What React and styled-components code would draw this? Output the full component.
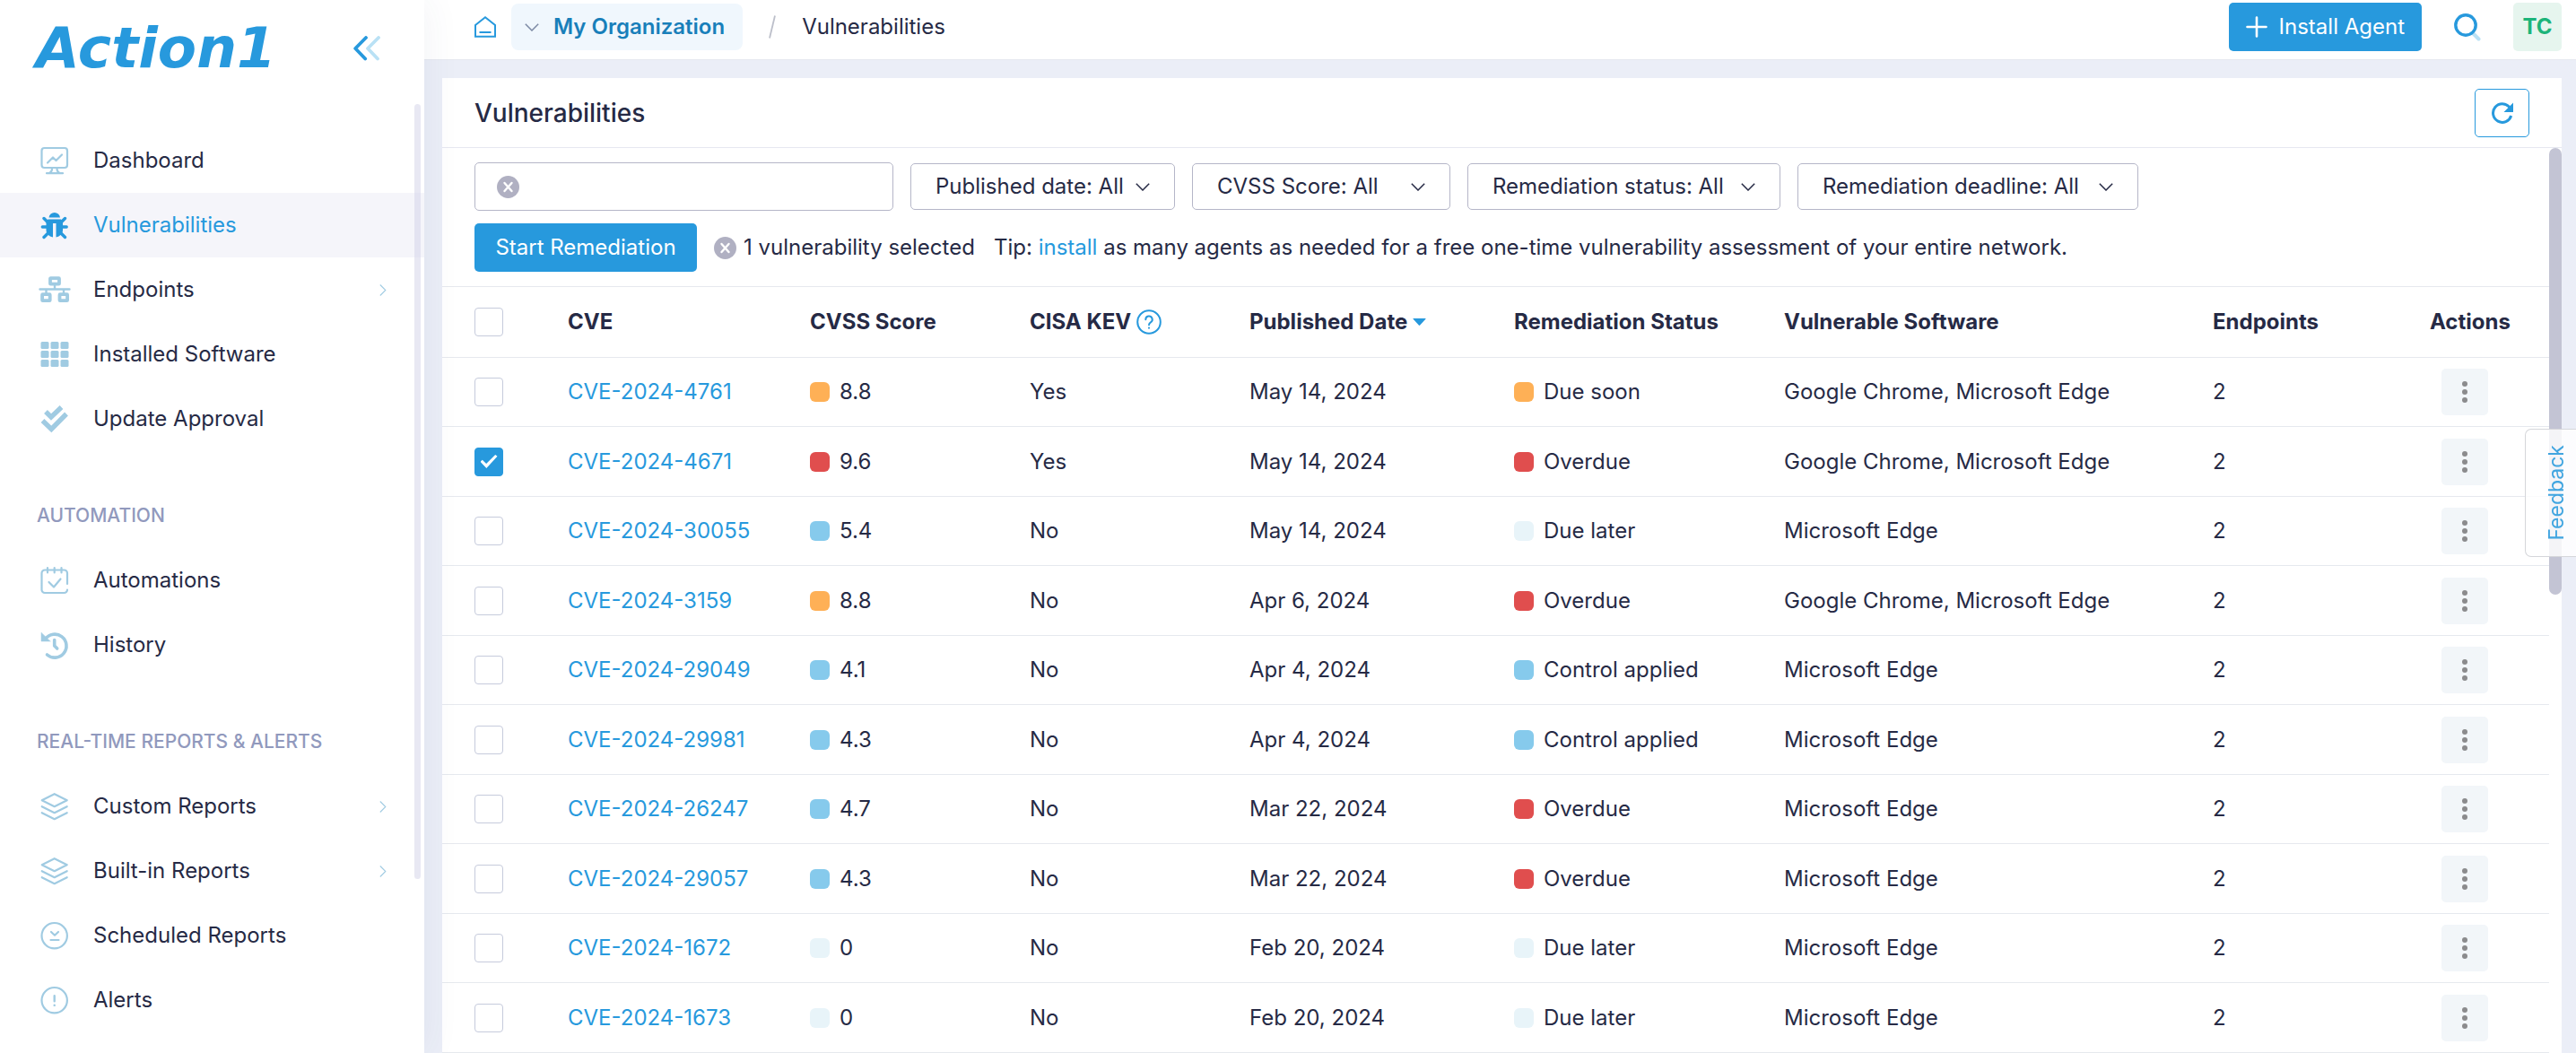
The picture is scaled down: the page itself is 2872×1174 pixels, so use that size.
import React from 'react';
import styled, { createGlobalStyle } from 'styled-components';

const GlobalStyle = createGlobalStyle`
  *, *::before, *::after {
    box-sizing: border-box;
  }

  body {
    margin: 0;
    background: #ebeef7;
    color: #262a45;
    font-family: Inter, 'Open Sans', sans-serif;
    font-size: 24px;
    line-height: 36px;
  }

  button, input, select {
    font: inherit;
    color: inherit;
    margin: 0;
  }

  button {
    padding: 0;
    border: 0;
    background: none;
    cursor: pointer;
  }

  svg {
    display: block;
    flex: none;
  }
`;

const Layout = styled.div`
  display: flex;
  height: 100vh;
  overflow: hidden;
`;

/* Sidebar */

const Sidebar = styled.aside`
  position: relative;
  z-index: 1;
  flex: none;
  display: flex;
  flex-direction: column;
  width: 473px;
  background: #fff;
  box-shadow: 0 0 40px rgba(60, 70, 110, 0.07);
`;

const SidebarTop = styled.div`
  display: flex;
  align-items: center;
  justify-content: space-between;
  height: 107px;
  padding: 0 49px 0 40px;
`;

const Logo = styled.a`
  color: #2799dd;
  font-family: 'DejaVu Sans', sans-serif;
  font-size: 63px;
  font-style: italic;
  font-weight: 700;
  line-height: 72px;
  text-decoration: none;
`;

const Nav = styled.nav`
  padding-top: 36px;
`;

const NavHeading = styled.h2`
  margin: 0;
  padding: 54px 41px 18px;
  color: #9199bd;
  font-size: 21px;
  font-weight: 500;
  line-height: 36px;
`;

const NavLink = styled.a`
  display: flex;
  align-items: center;
  gap: 26px;
  height: 72px;
  padding: 0 42px 0 44px;
  color: ${(p) => (p.$active ? '#2799dd' : '#262a45')};
  background: ${(p) => (p.$active ? '#f5f5fa' : 'transparent')};
  text-decoration: none;

  span {
    flex: 1;
  }
`;

const NavIcon = styled.svg`
  color: ${(p) => (p.$active ? '#2799dd' : '#a0cbe2')};
  fill: none;
  stroke: currentColor;
  stroke-linecap: round;
  stroke-linejoin: round;
  overflow: visible;
`;

const SidebarThumb = styled.div`
  position: absolute;
  top: 116px;
  right: 4px;
  width: 7px;
  height: 864px;
  border-radius: 4px;
  background: rgba(210, 210, 232, 0.5);
`;

/* Top bar */

const Main = styled.div`
  flex: 1;
  min-width: 0;
  display: flex;
  flex-direction: column;
`;

const TopBar = styled.header`
  flex: none;
  display: flex;
  align-items: center;
  justify-content: space-between;
  height: 67px;
  padding: 0 16px 6px 56px;
  border-bottom: 1px solid #e6e8f0;
  background: #fff;
`;

const Breadcrumbs = styled.nav`
  display: flex;
  align-items: center;
`;

const OrgButton = styled.button`
  display: flex;
  align-items: center;
  gap: 16px;
  height: 52px;
  margin: 0 29px 0 17px;
  padding: 0 20px 0 15px;
  border-radius: 8px;
  background: #f0f7fd;
  color: #187fba;
  font-weight: 600;
`;

const Crumb = styled.span`
  margin-left: 29px;
`;

const TopActions = styled.div`
  display: flex;
  align-items: center;
  gap: 36px;
`;

const PrimaryButton = styled.button`
  display: flex;
  align-items: center;
  justify-content: center;
  gap: 13px;
  min-width: ${(p) => (p.$wide ? '248px' : '0')};
  height: 54px;
  padding: 0 19px;
  border-radius: 5px;
  background: #2799dd;
  color: #fff;
`;

const Avatar = styled.button`
  width: 54px;
  height: 54px;
  border-radius: 5px;
  background: #e6f5ee;
  color: #1cb479;
  font-weight: 700;
`;

/* Panel */

const Panel = styled.section`
  flex: 1;
  min-height: 0;
  display: flex;
  flex-direction: column;
  margin: 20px 16px 0 20px;
  background: #fff;
`;

const PanelHeader = styled.div`
  flex: none;
  display: flex;
  align-items: center;
  justify-content: space-between;
  height: 78px;
  padding: 0 36px;
  border-bottom: 1px solid #e6e8f0;
`;

const PanelTitle = styled.h1`
  margin: 0;
  font-size: 28px;
  font-weight: 500;
`;

const RefreshButton = styled.button`
  display: flex;
  align-items: center;
  justify-content: center;
  width: 61px;
  height: 54px;
  border: 1px solid #2799dd;
  border-radius: 5px;
`;

const PanelBody = styled.div`
  flex: 1;
  min-height: 0;
  display: flex;
`;

const Content = styled.div`
  flex: 1;
  min-width: 0;
  overflow: hidden;
`;

const ScrollTrack = styled.div`
  flex: none;
  width: 14px;
`;

const ScrollThumb = styled.div`
  height: 498px;
  border-radius: 7px;
  background: #c3c4d4;
`;

const Toolbar = styled.div`
  display: flex;
  flex-direction: column;
  gap: 14px;
  padding: 16px 36px;
  border-bottom: 1px solid #e6e8ee;
`;

const ToolbarRow = styled.div`
  display: flex;
  align-items: center;
  gap: 19px;
`;

const SearchBox = styled.div`
  display: flex;
  align-items: center;
  gap: 12px;
  width: 467px;
  height: 54px;
  padding: 0 24px;
  border: 1px solid #b5b6c8;
  border-radius: 5px;

  input {
    flex: 1;
    min-width: 0;
    border: 0;
    outline: 0;
    background: none;
  }
`;

const FilterBox = styled.div`
  display: grid;
  align-items: center;
  width: ${(p) => p.$width}px;

  select {
    grid-area: 1 / 1;
    width: 100%;
    height: 52px;
    padding: 0 44px 0 27px;
    border: 1px solid #b5b6c8;
    border-radius: 5px;
    background: #fff;
    appearance: none;
  }

  svg {
    grid-area: 1 / 1;
    justify-self: end;
    margin-right: 28px;
    pointer-events: none;
  }
`;

const Selection = styled.div`
  display: flex;
  align-items: center;
  gap: 8px;
  min-width: 293px;
`;

const Tip = styled.p`
  margin: 0;
`;

const TextLink = styled.a`
  color: #2799dd;
  text-decoration: none;
`;

/* Table */

const Table = styled.table`
  width: 100%;
  table-layout: fixed;
  border-collapse: separate;
  border-spacing: 0;

  th, td {
    height: 77px;
    padding: 0;
    border-bottom: 1px solid #e6e9ee;
    text-align: left;
    white-space: nowrap;
  }

  tr:nth-child(even) td {
    height: 78px;
  }

  th {
    height: 79px;
    font-weight: 700;
  }

  th:first-child, td:first-child {
    padding-left: 36px;
  }
`;

const Column = styled.col`
  width: ${(p) => (p.$width ? `${p.$width}px` : 'auto')};
`;

const HeadCell = styled.div`
  display: flex;
  align-items: center;
  gap: 6px;
`;

const CheckBox = styled.input`
  display: grid;
  place-content: center;
  width: 32px;
  height: 32px;
  border: 1px solid #c6cbdc;
  border-radius: 4px;
  background: #fff;
  appearance: none;

  &:checked {
    border-color: #2799dd;
    background: #2799dd;
  }

  &:checked::before {
    content: '';
    width: 19px;
    height: 15px;
    background: #fff;
    clip-path: polygon(0 52%, 12% 38%, 35% 66%, 88% 0, 100% 12%, 36% 100%);
  }
`;

const Tagged = styled.div`
  display: flex;
  align-items: center;
  gap: 11px;
`;

const swatchColors = {
  orange: '#feb056',
  red: '#e04e4e',
  blue: '#86caec',
  pale: '#e8f4f9',
};

const Swatch = styled.i`
  width: 22px;
  height: 22px;
  border-radius: 6px;
  background: ${(p) => swatchColors[p.$color]};
`;

const MoreButton = styled.button`
  display: flex;
  align-items: center;
  justify-content: center;
  width: 52px;
  height: 52px;
  margin-left: 13px;
  border-radius: 5px;
  background: #f2f6f9;
`;

const FeedbackTab = styled.button`
  position: fixed;
  top: 478px;
  right: 0;
  width: 57px;
  height: 143px;
  padding: 10px 0 0 11px;
  border: 1px solid #d5d6da;
  border-right: 0;
  border-radius: 7px 0 0 7px;
  background: rgba(255, 255, 255, 0.82);
  color: #41a5e0;
  font-size: 23px;

  span {
    display: inline-block;
    writing-mode: vertical-rl;
    rotate: 180deg;
    line-height: 30px;
  }
`;

const icons = {
  dashboard: (
    <g strokeWidth="2.2">
      <rect x="1" y="1" width="28.5" height="22" rx="3" />
      <path d="M7.5 17.5l6-6 3.5 3.5 6.5-6.5M12.5 24c0 2.5-1 4-2.5 4.5M18 24c0 2.5 1 4 2.5 4.5M6.5 29.2h18" />
    </g>
  ),
  bug: (
    <g>
      <path d="M9 6.5a6.3 6.3 0 0 1 12.5 0z" fill="currentColor" stroke="none" />
      <path d="M8 8.5h14.5l2 3v9c0 4-3 7-7.5 8V13h-3.5v15.5c-4.500-1-7.5-4-7.5-8v-9z" fill="currentColor" stroke="none" />
      <path d="M3.5 7.5l5 5M27 7.5l-5 5M1.8 17h6M28.7 17h-6M3.5 28.5l5-5M27 28.5l-5-5" strokeWidth="3.4" />
    </g>
  ),
  network: (
    <g>
      <g strokeWidth="3.8">
        <rect x="10.5" y="2.2" width="10" height="6.5" rx="0.5" />
        <rect x="1.6" y="20.2" width="8.600" height="7" rx="0.5" />
        <rect x="21" y="20.2" width="8.600" height="7" rx="0.5" />
      </g>
      <path d="M-1 14.500h33M15.500 9v5M6 14.500v5M25.500 14.500v5" strokeWidth="2.400" />
    </g>
  ),
  grid: (
    <g fill="currentColor" stroke="none">
      {[0, 11, 22].map((x) =>
        [1, 11, 21].map((y) => <rect key={`${x}-${y}`} x={x} y={y} width="9" height="8" rx="1.5" />)
      )}
    </g>
  ),
  checks: (
    <path
      d="M5.500 7l6 6L23 2M2 17l9.800 9.500L28.500 9.500"
      strokeWidth="5.400"
      strokeLinecap="butt"
      strokeLinejoin="miter"
    />
  ),
  calendar: (
    <path
      strokeWidth="2.2"
      d="M29.5 19V7A3.500 3.500 0 0 0 26 3.500H4.500A3.500 3.500 0 0 0 1 7v18.500A3.500 3.500 0 0 0 4.500 29H26a3.500 3.500 0 0 0 3.500-3.500M7.500 1v5.500M15.200 1v5.500M23 1v5.500M9 17l5.500 5.500L22 13.500"
    />
  ),
  history: (
    <g>
      <path d="M5 8.500A13 13 0 1 1 7 26" strokeWidth="3.6" />
      <path d="M.5 1.500v9.500h10z" fill="currentColor" strokeWidth="0.5" />
      <path d="M15.200 9.500v6.500l3 3" strokeWidth="3.600" />
    </g>
  ),
  layers: <path d="M15.2 1.200l14 7-14 7-14-7zM1.200 15.200l14 7 14-7M1.200 22.200l14 7 14-7" strokeWidth="2.2" />,
  scheduled: (
    <g strokeWidth="2.2">
      <circle cx="15.2" cy="15.2" r="14.2" />
      <path d="M11.500 11l4 3.800 4-3.800M11 20h9" />
    </g>
  ),
  alert: (
    <g>
      <circle cx="15.2" cy="15.2" r="14.2" strokeWidth="2.2" />
      <path d="M15.200 10.200v6M15.200 20.800v.1" strokeWidth="2.4" />
    </g>
  ),
};

const navSections = [
  {
    items: [
      { label: 'Dashboard', icon: 'dashboard' },
      { label: 'Vulnerabilities', icon: 'bug', active: true },
      { label: 'Endpoints', icon: 'network', nested: true },
      { label: 'Installed Software', icon: 'grid' },
      { label: 'Update Approval', icon: 'checks' },
    ],
  },
  {
    title: 'AUTOMATION',
    items: [
      { label: 'Automations', icon: 'calendar' },
      { label: 'History', icon: 'history' },
    ],
  },
  {
    title: 'REAL-TIME REPORTS & ALERTS',
    items: [
      { label: 'Custom Reports', icon: 'layers', nested: true },
      { label: 'Built-in Reports', icon: 'layers', nested: true },
      { label: 'Scheduled Reports', icon: 'scheduled' },
      { label: 'Alerts', icon: 'alert' },
    ],
  },
];

const filters = [
  { label: 'Published date', width: 295 },
  { label: 'CVSS Score', width: 288 },
  { label: 'Remediation status', width: 349 },
  { label: 'Remediation deadline', width: 380 },
];

const columnWidths = [140, 270, 245, 245, 295, 301, null, 242, 133];

const both = 'Google Chrome, Microsoft Edge';
const edge = 'Microsoft Edge';

const rows = [
  { cve: 'CVE-2024-4761', score: '8.8', color: 'orange', kev: 'Yes', date: 'May 14, 2024', status: 'Due soon', software: both },
  { cve: 'CVE-2024-4671', score: '9.6', color: 'red', kev: 'Yes', date: 'May 14, 2024', status: 'Overdue', software: both, checked: true },
  { cve: 'CVE-2024-30055', score: '5.4', color: 'blue', kev: 'No', date: 'May 14, 2024', status: 'Due later', software: edge },
  { cve: 'CVE-2024-3159', score: '8.8', color: 'orange', kev: 'No', date: 'Apr 6, 2024', status: 'Overdue', software: both },
  { cve: 'CVE-2024-29049', score: '4.1', color: 'blue', kev: 'No', date: 'Apr 4, 2024', status: 'Control applied', software: edge },
  { cve: 'CVE-2024-29981', score: '4.3', color: 'blue', kev: 'No', date: 'Apr 4, 2024', status: 'Control applied', software: edge },
  { cve: 'CVE-2024-26247', score: '4.7', color: 'blue', kev: 'No', date: 'Mar 22, 2024', status: 'Overdue', software: edge },
  { cve: 'CVE-2024-29057', score: '4.3', color: 'blue', kev: 'No', date: 'Mar 22, 2024', status: 'Overdue', software: edge },
  { cve: 'CVE-2024-1672', score: '0', color: 'pale', kev: 'No', date: 'Feb 20, 2024', status: 'Due later', software: edge },
  { cve: 'CVE-2024-1673', score: '0', color: 'pale', kev: 'No', date: 'Feb 20, 2024', status: 'Due later', software: edge },
];

const statusColors = {
  'Due soon': 'orange',
  Overdue: 'red',
  'Due later': 'pale',
  'Control applied': 'blue',
};

const ChevronDown = ({ color = '#262a45' }) => (
  <svg width="16" height="9" viewBox="0 0 16 9" fill="none" stroke={color} strokeWidth="1.5">
    <path d="M.8.8L8 8 15.2.8" />
  </svg>
);

const ClearIcon = () => (
  <svg width="25" height="25" viewBox="0 0 25 25">
    <circle cx="12.5" cy="12.5" r="12.5" fill="#b0b0c2" />
    <path d="M8.500 8l8 9M16.500 8l-8 9" stroke="#fff" strokeWidth="2.4" strokeLinecap="round" />
  </svg>
);

const SidebarNav = () => (
  <Sidebar>
    <SidebarTop>
      <Logo href="#">Action1</Logo>
      <button aria-label="Collapse menu">
        <svg width="30" height="28" viewBox="0 0 30 28" fill="none" strokeWidth="3.8" strokeLinecap="round" strokeLinejoin="round">
          <path d="M28 2L16 14l11 11.5" stroke="#b9e1f5" />
          <path d="M14 2L2.200 14l11 11.5" stroke="#2799dd" />
        </svg>
      </button>
    </SidebarTop>
    <Nav>
      {navSections.map((section, index) => (
        <div key={index}>
          {section.title && <NavHeading>{section.title}</NavHeading>}
          {section.items.map((item) => (
            <NavLink key={item.label} href="#" $active={item.active}>
              <NavIcon width="34" height="31" viewBox="-1.5 0 34 31" $active={item.active}>
                {icons[item.icon]}
              </NavIcon>
              <span>{item.label}</span>
              {item.nested && (
                <svg width="8" height="13" viewBox="0 0 8 13" fill="none" stroke="#a0cbe2" strokeWidth="1.1">
                  <path d="M.8.500l6 6-6 6" />
                </svg>
              )}
            </NavLink>
          ))}
        </div>
      ))}
    </Nav>
    <SidebarThumb />
  </Sidebar>
);

const Header = () => (
  <TopBar>
    <Breadcrumbs aria-label="Breadcrumb">
      <a href="#" aria-label="Home">
        <svg width="24" height="24" viewBox="0 0 24 24" fill="none" stroke="#2799dd" strokeWidth="2">
          <path d="M1 10L12 1.300 23 10v12.800H1zM5.500 18h13" />
        </svg>
      </a>
      <OrgButton>
        <ChevronDown color="#7d8aa5" />
        My Organization
      </OrgButton>
      <svg width="8" height="26" viewBox="0 0 8 26" stroke="#bcbfca" strokeWidth="1.8">
        <path d="M7 .5L1 25.5" />
      </svg>
      <Crumb>Vulnerabilities</Crumb>
    </Breadcrumbs>
    <TopActions>
      <PrimaryButton>
        <svg width="24" height="24" viewBox="0 0 24 24" stroke="#fff" strokeWidth="2.6" strokeLinecap="round">
          <path d="M12 1.500v21M1.500 12h21" />
        </svg>
        Install Agent
      </PrimaryButton>
      <button aria-label="Search">
        <svg width="30" height="31" viewBox="0 0 30 31" fill="none">
          <path d="M21.500 22.500l6 6" stroke="#b9e1f5" strokeWidth="4" strokeLinecap="round" />
          <circle cx="13" cy="13" r="11.2" stroke="#2799dd" strokeWidth="3.4" />
        </svg>
      </button>
      <Avatar>TC</Avatar>
    </TopActions>
  </TopBar>
);

const VulnerabilityTable = () => (
  <Table>
    <colgroup>
      {columnWidths.map((width, index) => (
        <Column key={index} $width={width} />
      ))}
    </colgroup>
    <thead>
      <tr>
        <th><CheckBox type="checkbox" aria-label="Select all" /></th>
        <th>CVE</th>
        <th>CVSS Score</th>
        <th>
          <HeadCell>
            CISA KEV
            <svg width="28" height="28" viewBox="0 0 28 28" fill="none" stroke="#2799dd" strokeWidth="2" strokeLinecap="round">
              <circle cx="14" cy="14" r="12.8" />
              <path d="M10.300 11.200a3.700 3.700 0 1 1 5.600 3.100c-1.300.8-1.900 1.500-1.900 3M14 20.600v.1" />
            </svg>
          </HeadCell>
        </th>
        <th>
          <HeadCell>
            Published Date
            <svg width="15" height="8" viewBox="0 0 15 8" fill="#2799dd">
              <path d="M1 0h13q1 0 .4.800L8.200 7.600q-.7.600-1.400 0L.6.800Q0 0 1 0z" />
            </svg>
          </HeadCell>
        </th>
        <th>Remediation Status</th>
        <th>Vulnerable Software</th>
        <th>Endpoints</th>
        <th>Actions</th>
      </tr>
    </thead>
    <tbody>
      {rows.map((row) => (
        <tr key={row.cve}>
          <td><CheckBox type="checkbox" defaultChecked={row.checked} aria-label={`Select ${row.cve}`} /></td>
          <td><TextLink href="#">{row.cve}</TextLink></td>
          <td>
            <Tagged>
              <Swatch $color={row.color} />
              {row.score}
            </Tagged>
          </td>
          <td>{row.kev}</td>
          <td>{row.date}</td>
          <td>
            <Tagged>
              <Swatch $color={statusColors[row.status]} />
              {row.status}
            </Tagged>
          </td>
          <td>{row.software}</td>
          <td>2</td>
          <td>
            <MoreButton aria-label={`Actions for ${row.cve}`}>
              <svg width="6" height="24" viewBox="0 0 6 24" fill="#8b8b8d">
                <circle cx="3" cy="3" r="3" />
                <circle cx="3" cy="12" r="3" />
                <circle cx="3" cy="21" r="3" />
              </svg>
            </MoreButton>
          </td>
        </tr>
      ))}
    </tbody>
  </Table>
);

const App = () => (
  <>
    <GlobalStyle />
    <Layout>
      <SidebarNav />
      <Main>
        <Header />
        <Panel>
          <PanelHeader>
            <PanelTitle>Vulnerabilities</PanelTitle>
            <RefreshButton aria-label="Refresh">
              <svg width="24" height="24" viewBox="0 0 24 24" fill="none">
                <path d="M19.800 5.500A10.300 10.300 0 1 0 21.700 15" stroke="#2799dd" strokeWidth="3" />
                <path d="M24 .5V11H13.500z" fill="#2799dd" />
              </svg>
            </RefreshButton>
          </PanelHeader>
          <PanelBody>
            <Content>
              <Toolbar>
                <ToolbarRow>
                  <SearchBox>
                    <button aria-label="Clear search"><ClearIcon /></button>
                    <input type="text" aria-label="Search vulnerabilities" />
                  </SearchBox>
                  {filters.map((filter) => (
                    <FilterBox key={filter.label} $width={filter.width}>
                      <select aria-label={filter.label}>
                        <option>{`${filter.label}: All`}</option>
                      </select>
                      <ChevronDown />
                    </FilterBox>
                  ))}
                </ToolbarRow>
                <ToolbarRow>
                  <PrimaryButton $wide>Start Remediation</PrimaryButton>
                  <Selection>
                    <button aria-label="Clear selection"><ClearIcon /></button>
                    1 vulnerability selected
                  </Selection>
                  <Tip>
                    Tip: <TextLink href="#">install</TextLink> as many agents as needed for a free one-time
                    vulnerability assessment of your entire network.
                  </Tip>
                </ToolbarRow>
              </Toolbar>
              <VulnerabilityTable />
            </Content>
            <ScrollTrack>
              <ScrollThumb />
            </ScrollTrack>
          </PanelBody>
        </Panel>
      </Main>
    </Layout>
    <FeedbackTab><span>Feedback</span></FeedbackTab>
  </>
);

export default App;
